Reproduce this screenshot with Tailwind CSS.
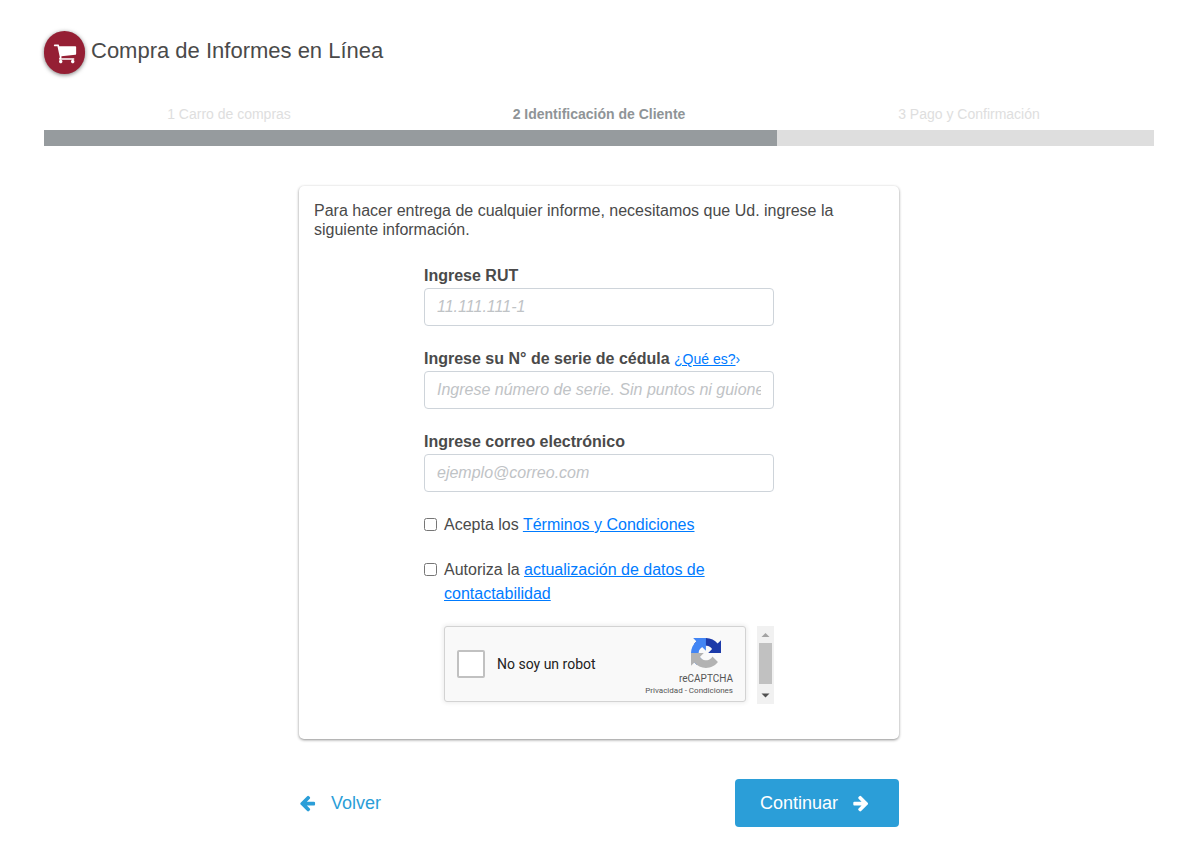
<!DOCTYPE html>
<html lang="es">

<head>
  <meta charset="UTF-8" />
  <meta name="viewport" content="width=device-width, initial-scale=1.0" />
  <title>Compra de Informes en Línea</title>
  <script src="https://cdn.jsdelivr.net/npm/@tailwindcss/browser@4"></script>
</head>

<body class="bg-white text-[#4a4a4a] font-['Liberation_Sans',Arial,sans-serif] text-base px-11 pt-[31px] pb-10">

  <!-- Encabezado -->
  <header class="flex items-center gap-[6px]">
    <span class="flex items-center justify-center w-[41px] h-[43px] rounded-full bg-[#951f34] shadow-[0_1px_4px_rgba(0,0,0,0.5)]">
      <svg class="w-6 h-6" viewBox="0 0 1792 1792" fill="#fff" aria-hidden="true">
        <path d="M704 1536q0 52-38 90t-90 38-90-38-38-90 38-90 90-38 90 38 38 90zm896 0q0 52-38 90t-90 38-90-38-38-90 38-90 90-38 90 38 38 90zm128-1088v512q0 24-16.500 42.500t-40.500 21.500l-1044 122q13 60 13 70 0 16-24 64h920q26 0 45 19t19 45-19 45-45 19h-1024q-26 0-45-19t-19-45q0-11 8-31.500t16-36 21.500-40 15.500-29.500l-177-823h-204q-26 0-45-19t-19-45 19-45 45-19h256q16 0 28.500 6.500t19.500 15.500 13 24.500 8 26 5.500 29.500 4.500 26h1201q26 0 45 19t19 45z" />
      </svg>
    </span>
    <h1 class="text-[22px] leading-10 pb-[3px]">Compra de Informes en Línea</h1>
  </header>

  <!-- Pasos -->
  <ol class="grid grid-cols-3 mt-[30px] text-sm leading-5 text-center text-[#dedede]">
    <li>1 Carro de compras</li>
    <li class="font-bold text-[#8f9497]">2 Identificación de Cliente</li>
    <li>3 Pago y Confirmación</li>
  </ol>
  <div class="mt-[6px] h-4 bg-[#dedede]">
    <div class="h-full w-[66%] bg-[#969b9e]"></div>
  </div>

  <form class="w-full max-w-[600px] mx-auto mt-10">
    <!-- Datos del cliente -->
    <div class="rounded-[5px] shadow-[0_1px_3px_rgba(0,0,0,0.45)] px-[15px] pt-[15px] pb-[35px]">
      <p class="leading-[19px]">Para hacer entrega de cualquier informe, necesitamos que Ud. ingrese la siguiente información.</p>

      <div class="w-full max-w-[350px] mx-auto mt-[25px]">
        <label for="rut" class="block font-bold leading-6">Ingrese RUT</label>
        <input id="rut" type="text" placeholder="11.111.111-1"
          class="block w-full h-[38px] px-3 border border-[#ced4da] rounded placeholder:italic placeholder:text-[#bfc3c6]">

        <div class="mt-[21px] leading-6">
          <label for="serie" class="font-bold">Ingrese su N° de serie de cédula</label>
          <a href="#" class="text-sm text-[#007bff]"><span class="underline">¿Qué es?</span>›</a>
        </div>
        <input id="serie" type="text" placeholder="Ingrese número de serie. Sin puntos ni guiones"
          class="block w-full h-[38px] px-3 border border-[#ced4da] rounded placeholder:italic placeholder:text-[#bfc3c6]">

        <label for="correo" class="block mt-[21px] font-bold leading-6">Ingrese correo electrónico</label>
        <input id="correo" type="email" placeholder="ejemplo@correo.com"
          class="block w-full h-[38px] px-3 border border-[#ced4da] rounded placeholder:italic placeholder:text-[#bfc3c6]">

        <div class="flex items-start mt-[21px] leading-6">
          <input id="terminos" type="checkbox" class="w-[13px] h-[13px] mt-[5px] mr-[7px]">
          <label for="terminos">Acepta los <a href="#" class="text-[#007bff] underline">Términos y Condiciones</a></label>
        </div>
        <div class="flex items-start mt-[21px] leading-6">
          <input id="datos" type="checkbox" class="w-[13px] h-[13px] mt-[5px] mr-[7px]">
          <label for="datos" class="flex-1">Autoriza la <a href="#" class="text-[#007bff] underline">actualización de datos de contactabilidad</a></label>
        </div>

        <!-- reCAPTCHA -->
        <div class="flex justify-between mt-5 pl-5 h-[78px]">
          <div class="flex justify-between w-[302px] h-19 bg-[#f9f9f9] border border-[#d3d3d3] rounded-[3px] shadow-[0_0_4px_1px_rgba(0,0,0,0.08)] font-[Roboto,sans-serif]">
            <div class="flex items-center pl-3">
              <input id="robot" type="checkbox" class="appearance-none w-7 h-7 bg-white border-2 border-[#c1c1c1] rounded-[2px]">
              <label for="robot" class="pl-3 text-sm text-[#222]">No soy un robot</label>
            </div>
            <div class="flex flex-col items-end pr-3 pt-[11px] text-[#555]">
              <svg class="w-[30px] h-[30px] mr-3" viewBox="0 0 64 64" aria-hidden="true">
                <path fill="#1c3aa9" d="M64 31.955l-.033-1.370V4.687l-7.160 7.160C50.948 4.674 42.033.093 32.050.093c-10.400 0-19.622 4.960-25.458 12.640l11.736 11.860a15.550 15.550 0 0 1 4.754-5.334c2.050-1.600 4.952-2.906 8.968-2.906.485 0 .860.057 1.135.163 4.976.393 9.288 3.140 11.828 7.124l-8.307 8.307L64 31.953" />
                <path fill="#4285f4" d="M31.862.094l-1.370.033H4.594l7.160 7.160C4.580 13.147 0 22.060 0 32.046c0 10.400 4.960 19.622 12.640 25.458L24.500 45.768a15.550 15.550 0 0 1-5.334-4.754c-1.600-2.050-2.906-4.952-2.906-8.968 0-.485.057-.860.163-1.135.393-4.976 3.140-9.288 7.124-11.828l8.307 8.307L31.860.095" />
                <path fill="#b3b3b3" d="M.001 32.045l.033 1.370v25.898l7.160-7.160c5.860 7.173 14.774 11.754 24.760 11.754 10.400 0 19.622-4.960 25.458-12.640l-11.736-11.860a15.550 15.550 0 0 1-4.754 5.334c-2.050 1.600-4.952 2.906-8.968 2.906-.485 0-.860-.057-1.135-.163-4.976-.393-9.288-3.140-11.828-7.124l8.307-8.307c-10.522.040-22.400.066-27.295-.005" />
              </svg>
              <span class="mt-[6px] text-[10px] leading-[10px]">reCAPTCHA</span>
              <span class="mt-[2px] text-[8px] leading-[10px]"><a href="#">Privacidad</a> - <a href="#">Condiciones</a></span>
            </div>
          </div>
          <!-- Barra de desplazamiento -->
          <div class="flex flex-col items-center w-[17px] bg-[#f1f1f1]">
            <svg class="w-[17px] h-[17px]" viewBox="0 0 17 17" fill="#a3a3a3" aria-hidden="true"><path d="M8.500 7L12.500 11H4.500z" /></svg>
            <div class="w-[13px] h-[41px] bg-[#c1c1c1]"></div>
            <svg class="w-[17px] h-[17px] mt-auto" viewBox="0 0 17 17" fill="#505050" aria-hidden="true"><path d="M8.500 10.500L12.500 6.500H4.500z" /></svg>
          </div>
        </div>
      </div>
    </div>

    <!-- Acciones -->
    <div class="flex items-center justify-between mt-10 text-lg">
      <a href="#" class="flex items-center gap-[14px] text-[#2b9ed8]">
        <svg class="w-[18px] h-[18px]" viewBox="64 0 1792 1792" fill="currentColor" aria-hidden="true">
          <path d="M1664 896v128q0 53-32.500 90.500t-84.500 37.500h-704l293 294q38 36 38 90t-38 90l-75 76q-37 37-90 37-52 0-91-37l-651-652q-37-37-37-90 0-52 37-91l651-650q38-38 91-38 52 0 90 38l75 74q38 38 38 91t-38 91l-293 293h704q52 0 84.500 37.500t32.500 90.500z" />
        </svg>
        Volver
      </a>
      <button type="button" class="flex items-center justify-center gap-[14px] w-[164px] h-12 pr-1 rounded bg-[#2b9ed8] text-white">
        Continuar
        <svg class="w-[18px] h-[18px] -scale-x-100" viewBox="0 0 1792 1792" fill="currentColor" aria-hidden="true">
          <path d="M1664 896v128q0 53-32.500 90.500t-84.500 37.500h-704l293 294q38 36 38 90t-38 90l-75 76q-37 37-90 37-52 0-91-37l-651-652q-37-37-37-90 0-52 37-91l651-650q38-38 91-38 52 0 90 38l75 74q38 38 38 91t-38 91l-293 293h704q52 0 84.500 37.500t32.500 90.500z" />
        </svg>
      </button>
    </div>
  </form>

</body>

</html>
